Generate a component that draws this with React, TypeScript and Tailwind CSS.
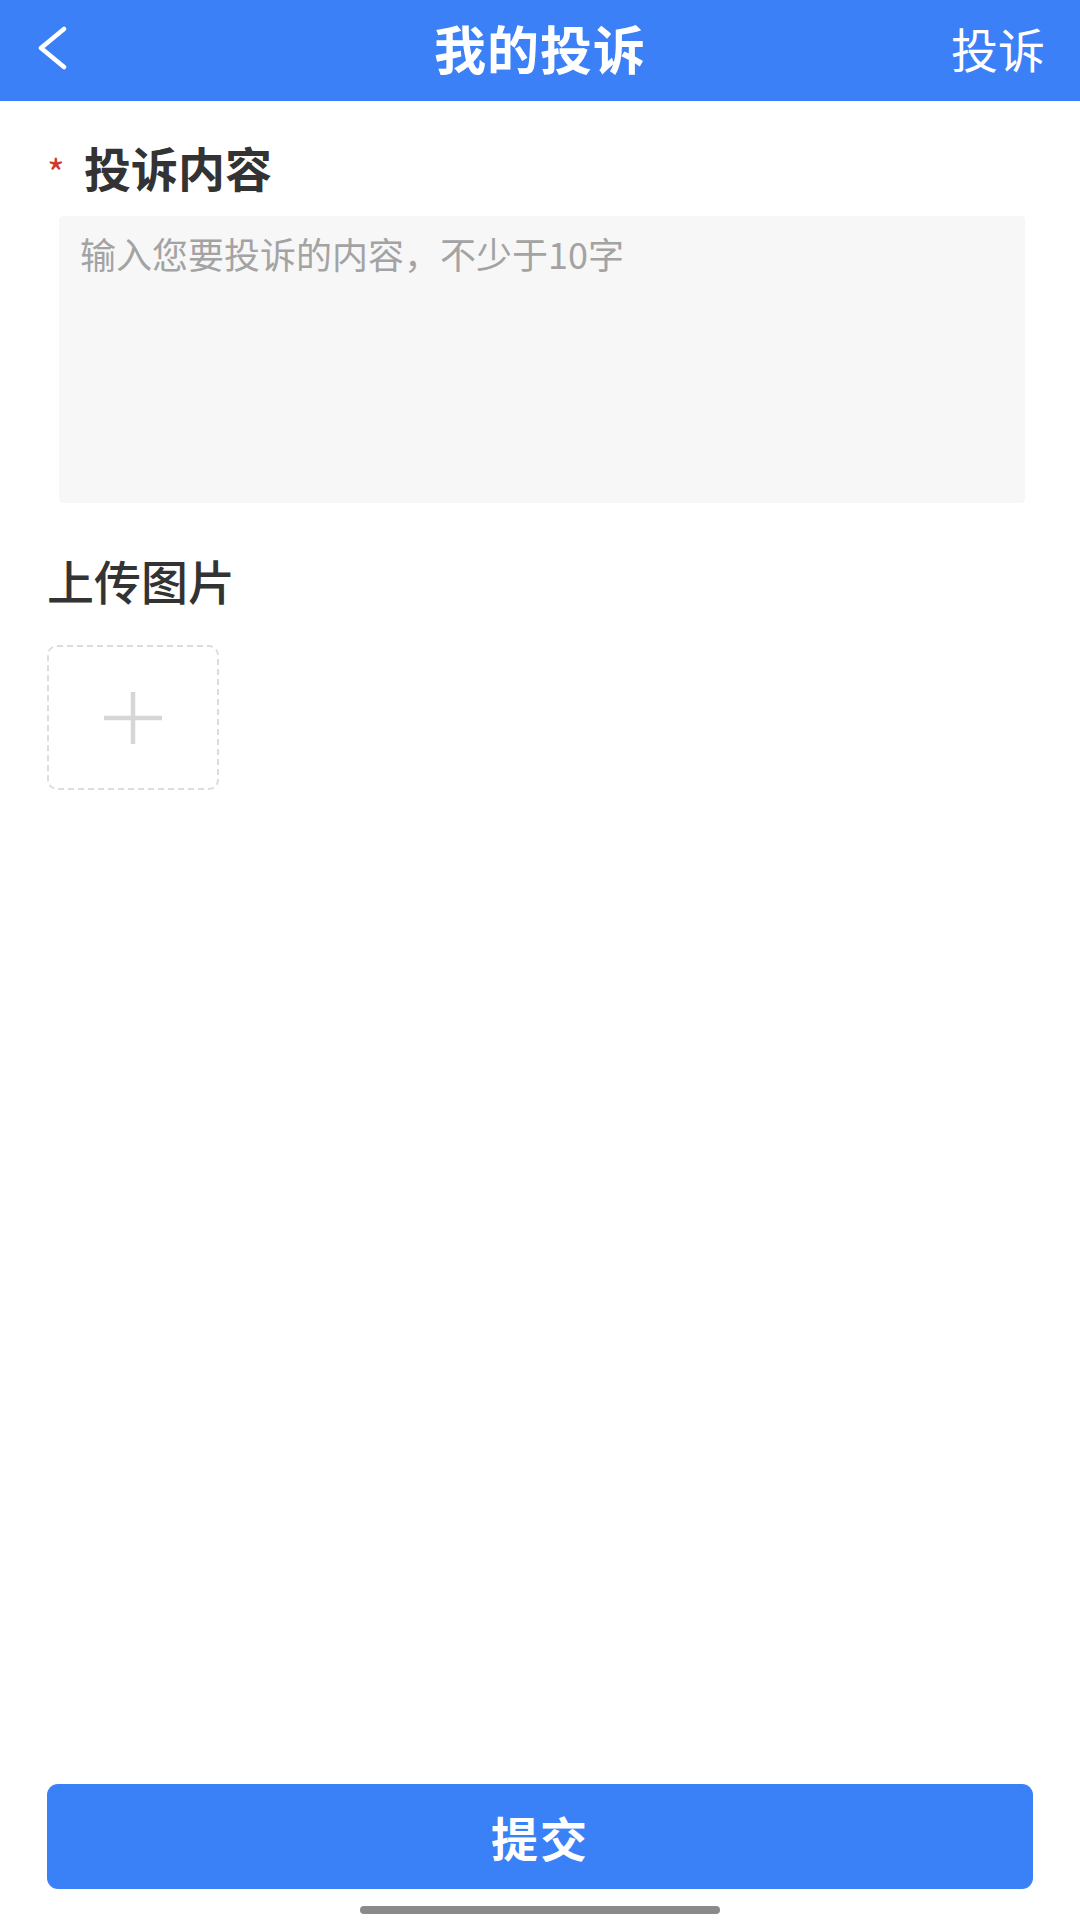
import React, { useState } from 'react';

const App: React.FC = () => {
  const [content, setContent] = useState('');

  return (
    <div className="w-[1080px] h-[1920px] bg-white flex flex-col font-['Noto_Sans_CJK_SC','Noto_Sans',sans-serif] text-[#333]">
      {/* 顶部导航 */}
      <div className="h-[101px] bg-[#3b80f7] grid grid-cols-[1fr_auto_1fr] items-center px-[35px] pb-[6px] text-white shrink-0">
        <button className="w-[60px] h-[60px] flex items-center">
          <svg width="34" height="44" viewBox="0 0 34 44" fill="none">
            <path d="M29 3 L6 22 L29 41" stroke="white" strokeWidth="4.5" strokeLinecap="round" strokeLinejoin="round" />
          </svg>
        </button>
        <h1 className="text-[52px] font-bold leading-none tracking-[1px]">我的投诉</h1>
        <span className="text-[47px] leading-none text-right whitespace-nowrap">投诉</span>
      </div>

      <div className="flex flex-col px-[47px]">
        {/* 投诉内容 */}
        <div className="flex items-center h-[56px] mt-[37px]">
          <span className="text-[#cf3a30] text-[38px] leading-none w-[37px] pt-[12px]">*</span>
          <span className="text-[47px] font-bold leading-none">投诉内容</span>
        </div>
        <div className="mt-[22px] ml-[12px] mr-[8px] h-[287px] bg-[#f7f7f7] rounded-[4px]">
          <textarea
            value={content}
            onChange={e => setContent(e.target.value)}
            placeholder="输入您要投诉的内容，不少于10字"
            className="w-full h-full resize-none bg-transparent outline-none pt-[16px] px-[21px] text-[36px] leading-[1.2] placeholder:text-[#a3a3a3]"
          />
        </div>

        {/* 上传图片 */}
        <div className="mt-[48px] h-[56px] flex items-center">
          <span className="text-[47px] font-medium leading-none">上传图片</span>
        </div>
        <div className="mt-[38px] w-[172px] h-[145px] border-2 border-dashed border-[#dcdcdc] rounded-[10px] flex items-center justify-center">
          <svg width="60" height="54" viewBox="0 0 60 54">
            <path d="M1 27 H59 M30 1 V53" stroke="#d6d6d6" strokeWidth="4.5" />
          </svg>
        </div>
      </div>

      <div className="flex-1" />

      {/* 提交按钮 */}
      <div className="px-[47px] shrink-0">
        <button className="w-full h-[105px] bg-[#3a80f7] rounded-[11px] text-white text-[47px] font-bold leading-none tracking-[2px]">
          提交
        </button>
      </div>
      <div className="h-[31px] flex items-end justify-center pb-[6px] shrink-0">
        <div className="w-[360px] h-[8px] rounded-full bg-[#8a8a8a]" />
      </div>
    </div>
  );
};

export default App;
